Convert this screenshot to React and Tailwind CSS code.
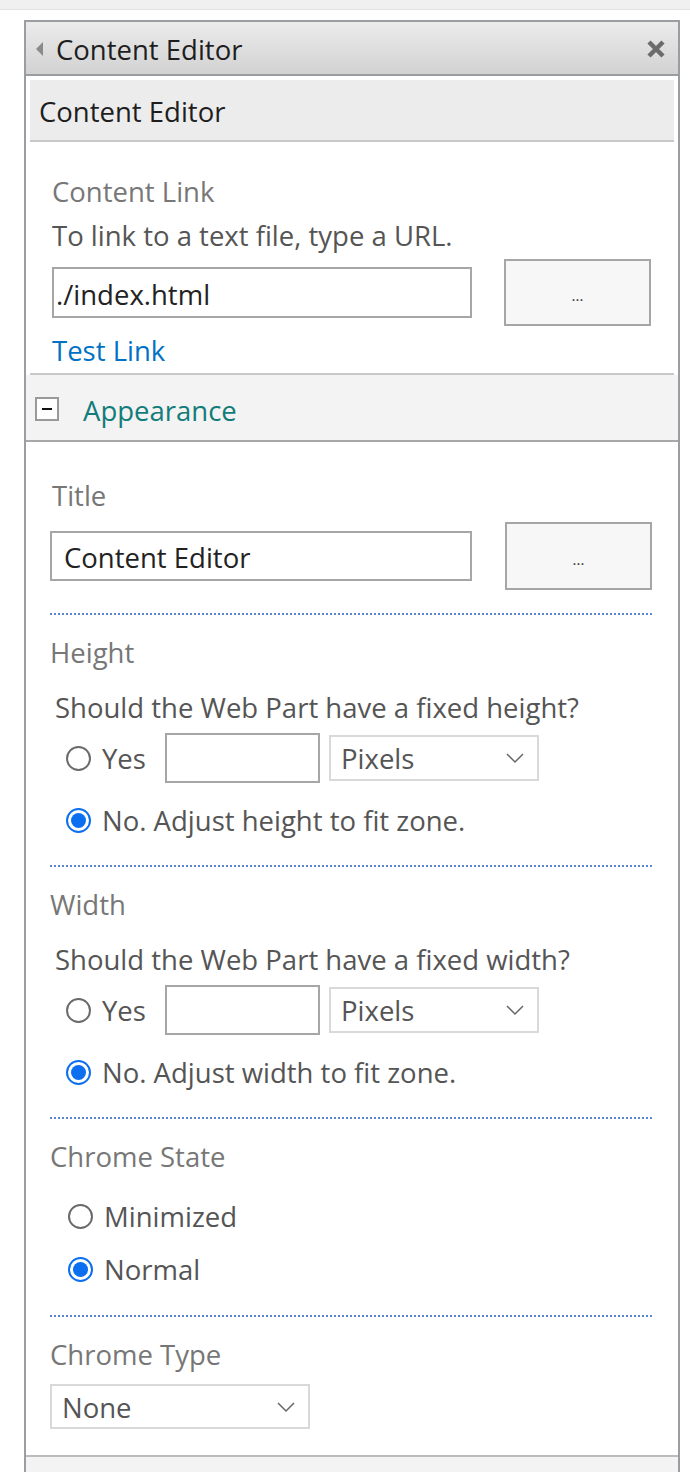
import React from 'react';

const font = { fontFamily: '"Open Sans", "Noto Sans", sans-serif' };

const Radio = ({ checked }) =>
  checked ? (
    <span className="flex h-[25px] w-[25px] shrink-0 items-center justify-center rounded-full border-2 border-[#0b6ff0] bg-white">
      <span className="h-[15px] w-[15px] rounded-full bg-[#0b6ff0]" />
    </span>
  ) : (
    <span className="h-[25px] w-[25px] shrink-0 rounded-full border-2 border-[#6a6a6a] bg-white" />
  );

const Chevron = () => (
  <svg width="20" height="12" viewBox="0 0 20 12" className="shrink-0">
    <path d="M2 2 L10 10 L18 2" fill="none" stroke="#666" strokeWidth="1.5" />
  </svg>
);

const Select = ({ value, className }) => (
  <div className={`flex items-center justify-between border-2 border-[#d9d9d9] bg-white pl-[10px] pr-[12px] text-[#555] ${className}`}>
    <span className="pt-[2px]">{value}</span>
    <Chevron />
  </div>
);

const Dotted = () => (
  <div className="mr-[24px] border-t-2 border-dotted border-[#5a86d4]" />
);

const SizeGroup = ({ label, question, noText }) => (
  <>
    <div className="mt-[16px] flex h-[40px] items-center pt-[3px] text-[#777]">{label}</div>
    <div className="mt-[15px] flex h-[40px] items-center pl-[5px] pt-[3px] text-[#555]">{question}</div>
    <div className="mt-[7px] flex h-[50px] items-center pl-[16px]">
      <Radio />
      <span className="ml-[11px] w-[52px] pt-[2px] text-[#555]">Yes</span>
      <div className="ml-[11px] h-[50px] w-[155px] border-2 border-[#a6a6a6] bg-white" />
      <Select value="Pixels" className="ml-[9px] h-[46px] w-[210px]" />
    </div>
    <div className="mt-[17px] flex h-[40px] items-center pl-[16px]">
      <Radio checked />
      <span className="ml-[11px] pt-[2px] text-[#555]">{noText}</span>
    </div>
    <div className="mt-[25px]">
      <Dotted />
    </div>
  </>
);

export default function App() {
  return (
    <div className="min-h-[1472px] bg-white text-[27.5px] leading-none" style={font}>
      <div className="h-[10px] border-b border-[#e4e4e4] bg-[#f0f0f0]" />
      <div className="mt-[10px] ml-[24px] w-[656px] border-x-2 border-t-2 border-[#9a9ea3]">
        {/* Header */}
        <div className="flex h-[54px] items-center border-b-2 border-[#9a9ea3] bg-gradient-to-b from-[#ebebeb] to-[#d2d2d2] pl-[8px] pr-[12px]">
          <svg width="10" height="16" viewBox="0 0 10 16" className="mt-[2px] shrink-0">
            <path d="M9 1 L2 8 L9 15 Z" fill="#8a8a8a" />
          </svg>
          <span className="ml-[12px] pt-[4px] text-[#1e1e1e]">Content Editor</span>
          <svg width="20" height="18" viewBox="0 0 20 18" className="ml-auto mt-[2px] shrink-0">
            <path d="M3 2 L17 16 M17 2 L3 16" stroke="#6b6b6b" strokeWidth="4.5" />
          </svg>
        </div>

        <div className="px-[4px] pt-[4px]">
          <div className="flex h-[62px] items-center border-b-2 border-[#c8c8c8] bg-[#ececec] pl-[9px] pt-[4px] text-[#1e1e1e]">
            Content Editor
          </div>

          {/* Content Link */}
          <div className="pl-[22px]">
            <div className="mt-[28px] flex h-[40px] items-center pt-[4px] text-[#777]">Content Link</div>
            <div className="mt-[5px] flex h-[40px] items-center pt-[2px] text-[#555]">To link to a text file, type a URL.</div>
            <div className="mt-[4px] flex h-[67px] items-center">
              <div className="flex h-[51px] w-[420px] items-center border-2 border-[#a6a6a6] bg-white pl-[2px] pt-[4px] text-[#222]">
                ./index.html
              </div>
              <button className="ml-[32px] flex h-[67px] w-[147px] items-center justify-center border-2 border-[#a6a6a6] bg-[#f7f7f7] pt-[6px] text-[15px] text-[#333]">
                ...
              </button>
            </div>
            <div className="mt-[3px] flex h-[40px] items-center pt-[4px] text-[#0072c6]">Test Link</div>
          </div>
          <div className="mt-[4px] border-t-2 border-[#c8c8c8]" />
        </div>

        {/* Appearance */}
        <div className="flex h-[67px] items-center border-b-2 border-[#a8a8a8] bg-[#f3f3f3] pl-[9px] pt-[3px]">
          <span className="flex h-[24px] w-[24px] items-center justify-center border-2 border-[#999] bg-white">
            <span className="h-[2px] w-[10px] bg-[#111]" />
          </span>
          <span className="ml-[24px] pt-[4px] text-[#127c7a]">Appearance</span>
        </div>

        <div className="pl-[24px] pr-[2px]">
          <div className="mt-[32px] flex h-[40px] items-center pl-[2px] pt-[3px] text-[#777]">Title</div>
          <div className="mt-[8px] flex h-[68px] items-center">
            <div className="flex h-[50px] w-[422px] items-center border-2 border-[#a6a6a6] bg-white pl-[12px] pt-[3px] text-[#222]">
              Content Editor
            </div>
            <button className="ml-[33px] flex h-[68px] w-[147px] items-center justify-center border-2 border-[#a6a6a6] bg-[#f7f7f7] pt-[6px] text-[15px] text-[#333]">
              ...
            </button>
          </div>
          <div className="mt-[23px]">
            <Dotted />
          </div>

          <SizeGroup
            label="Height"
            question="Should the Web Part have a fixed height?"
            noText="No. Adjust height to fit zone."
          />
          <SizeGroup
            label="Width"
            question="Should the Web Part have a fixed width?"
            noText="No. Adjust width to fit zone."
          />

          <div className="mt-[16px] flex h-[40px] items-center pt-[3px] text-[#777]">Chrome State</div>
          <div className="mt-[21px] flex h-[40px] items-center pl-[18px]">
            <Radio />
            <span className="ml-[11px] pt-[2px] text-[#555]">Minimized</span>
          </div>
          <div className="mt-[13px] flex h-[40px] items-center pl-[18px]">
            <Radio checked />
            <span className="ml-[11px] pt-[2px] text-[#555]">Normal</span>
          </div>
          <div className="mt-[26px]">
            <Dotted />
          </div>
          <div className="mt-[16px] flex h-[40px] items-center pt-[3px] text-[#777]">Chrome Type</div>
          <Select value="None" className="mt-[11px] h-[45px] w-[260px]" />
        </div>
        <div className="mt-[26px] h-[20px] border-t-2 border-[#bcbcbc] bg-[#f3f3f3]" />
      </div>
    </div>
  );
}
